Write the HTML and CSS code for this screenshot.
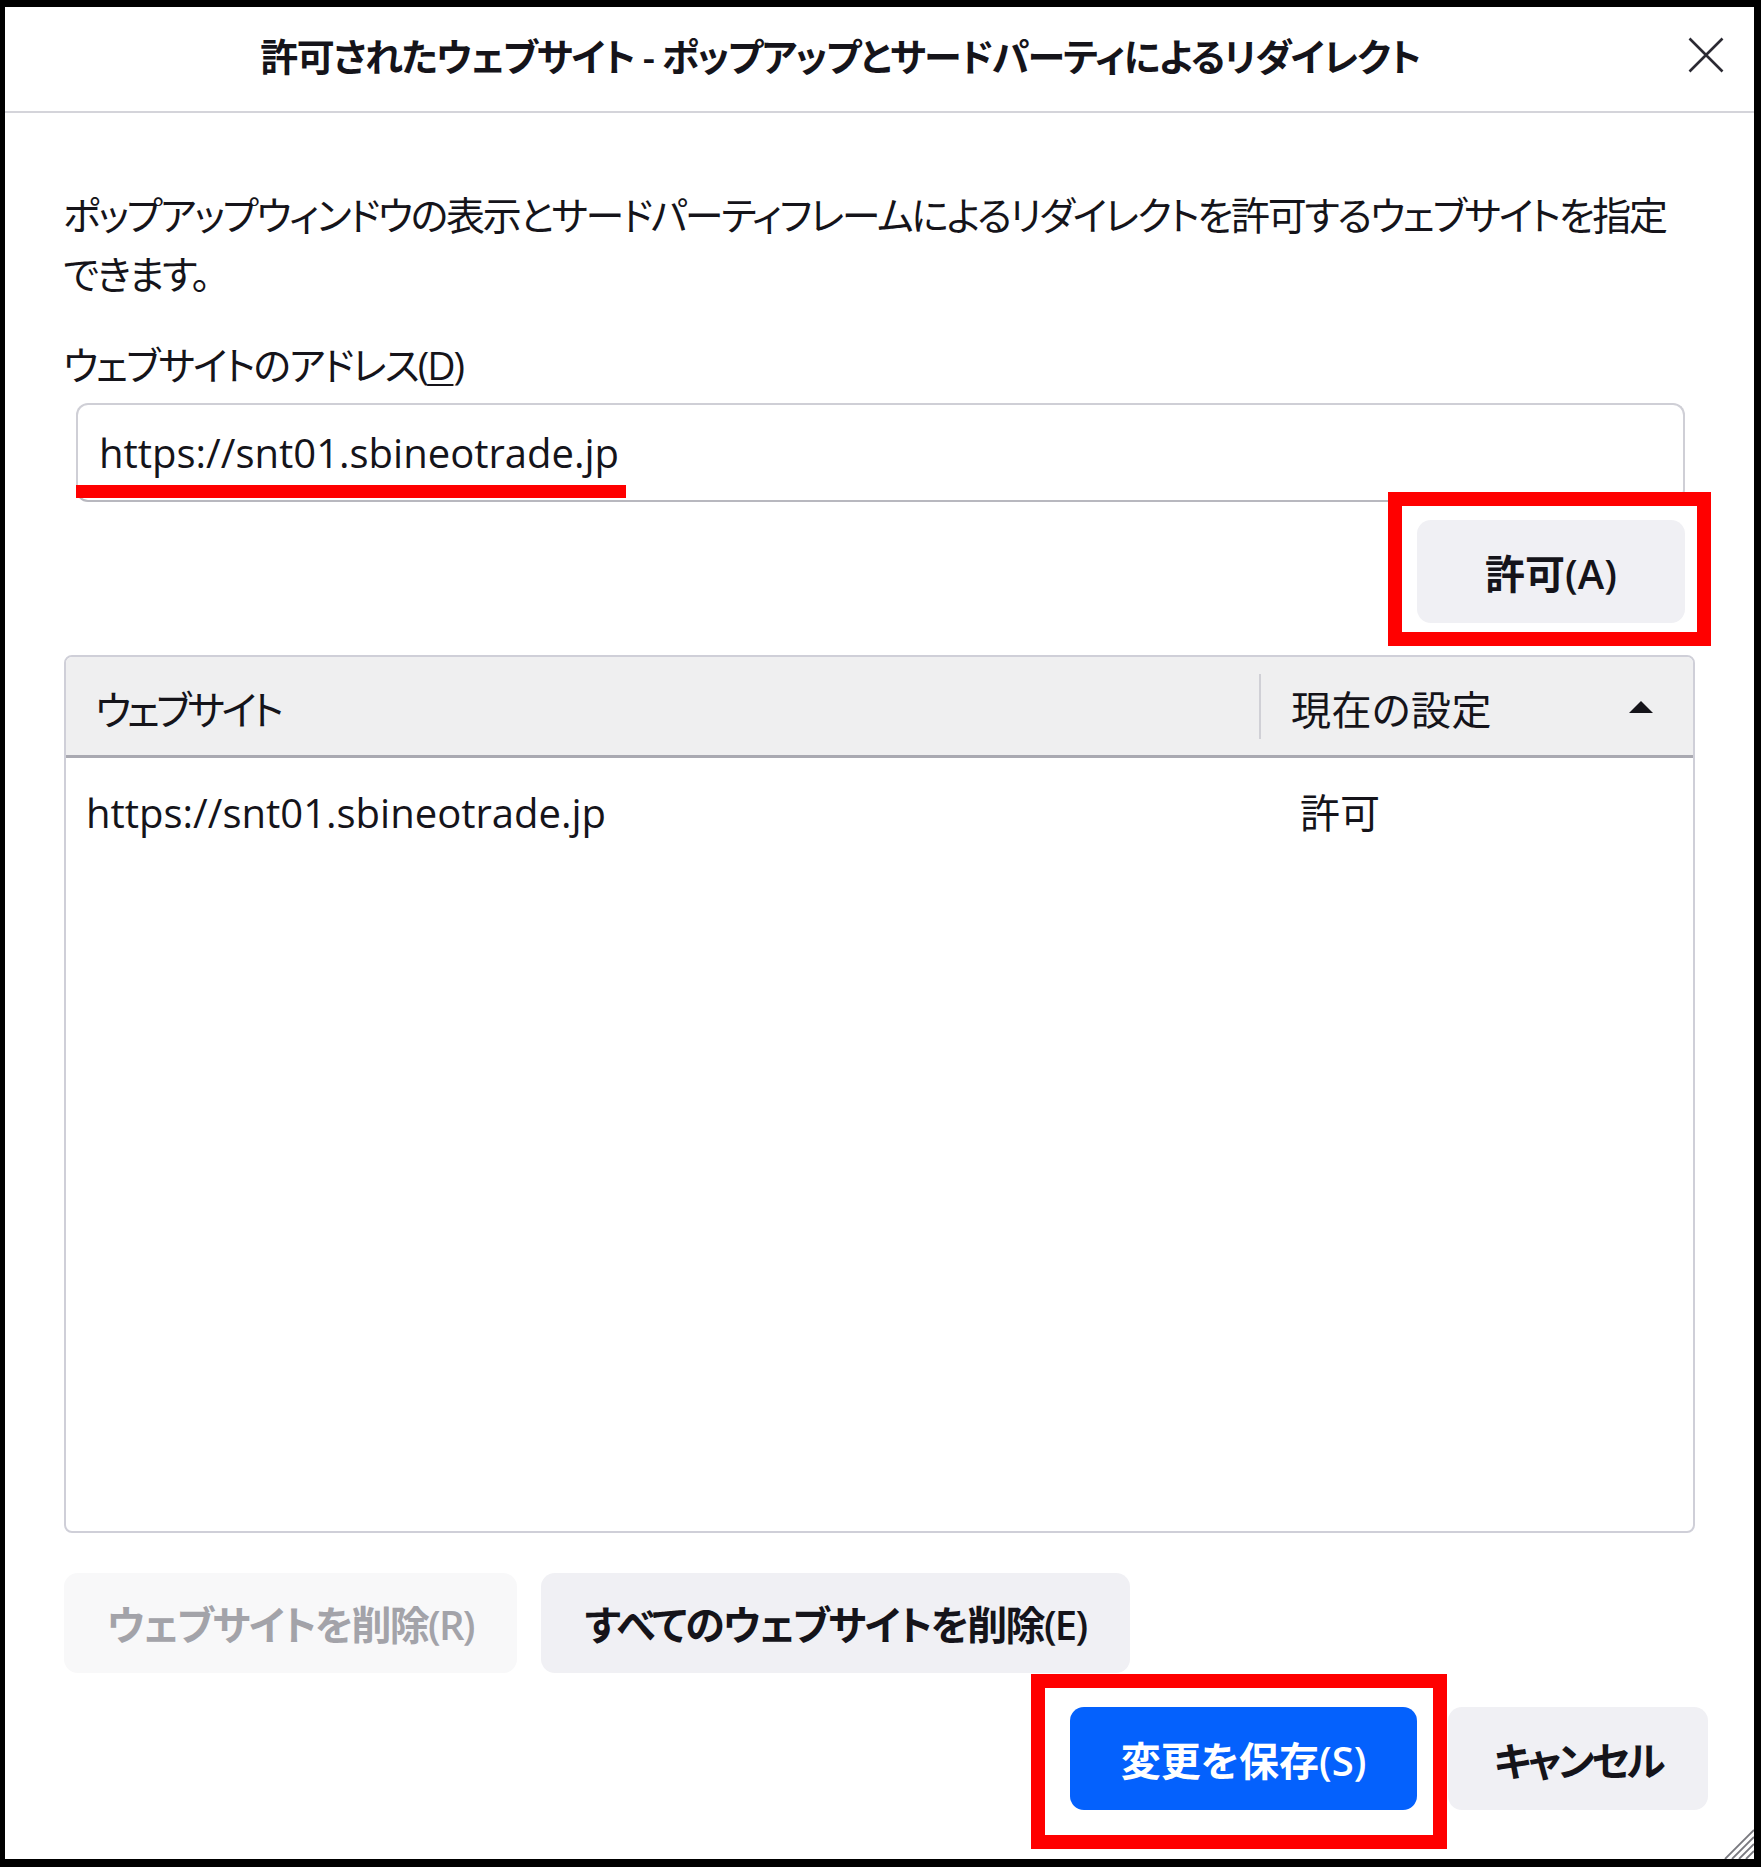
FILE: index.html
```html
<!DOCTYPE html>
<html lang="ja">
<head>
<meta charset="utf-8">
<title>許可されたウェブサイト</title>
<link rel="stylesheet" href="styles.css">
</head>
<body>
<div class="frame">
  <header class="titlebar">
    <h1 class="title">許可されたウェブサイト - ポップアップとサードパーティによるリダイレクト</h1>
    <button class="close" aria-label="閉じる">
      <svg width="36" height="36" viewBox="0 0 36 36"><path d="M1.5 1.5L34.5 34.5M34.5 1.5L1.5 34.5" stroke="#2b2a33" stroke-width="2.6" fill="none"/></svg>
    </button>
  </header>
  <main class="content">
    <p class="desc">ポップアップウィンドウの表示とサードパーティフレームによるリダイレクトを許可するウェブサイトを指定<br>できます。</p>
    <label class="label" for="url">ウェブサイトのアドレス(<u>D</u>)</label>
    <div class="input-wrap">
      <input id="url" class="input" type="text" value="https://snt01.sbineotrade.jp" readonly>
      <span class="mark-underline"></span>
    </div>
    <div class="allow-row">
      <div class="hl">
        <button class="btn btn-allow">許可(A)</button>
        <span class="mark-box mark-allow"></span>
      </div>
    </div>
    <div class="tree">
      <div class="tree-head">
        <div class="th th-site">ウェブサイト</div>
        <div class="th th-state">
          <span>現在の設定</span>
          <svg class="sort" width="24" height="12" viewBox="0 0 24 12"><path d="M12 0L24 12H0Z" fill="#15141a"/></svg>
        </div>
      </div>
      <div class="tree-row">
        <div class="td td-site">https://snt01.sbineotrade.jp</div>
        <div class="td td-state">許可</div>
      </div>
    </div>
    <div class="actions">
      <button class="btn btn-remove" disabled>ウェブサイトを削除(R)</button>
      <button class="btn btn-remove-all">すべてのウェブサイトを削除(E)</button>
    </div>
    <div class="footer">
      <div class="hl">
        <button class="btn btn-save">変更を保存(S)</button>
        <span class="mark-box mark-save"></span>
      </div>
      <button class="btn btn-cancel">キャンセル</button>
    </div>
  </main>
  <svg class="grip" width="30" height="32" viewBox="0 0 30 32">
    <path d="M30 3L1 32M30 10L8 32M30 17L15 32M30 24L22 32" stroke="#7a7a80" stroke-width="1.8" fill="none"/>
  </svg>
</div>
</body>
</html>
```
FILE: styles.css
```css
body {
  margin: 0;
  background: #fff;
}

.frame {
  position: relative;
  width: 1761px;
  height: 1867px;
  box-sizing: border-box;
  border: solid #000;
  border-width: 7px 7px 8px 5px;
  background: #fff;
  color: #15141a;
  font-family: "Open Sans", "Noto Sans CJK JP", sans-serif;
  font-feature-settings: "palt";
  display: flex;
  flex-direction: column;
}

.titlebar {
  height: 104px;
  flex: none;
  border-bottom: 2px solid #d4d4da;
  display: flex;
  align-items: flex-start;
}

.title {
  flex: 1;
  margin: 0;
  padding-top: 19px;
  font-size: 38px;
  letter-spacing: -1.5px;
  line-height: 60px;
  font-weight: 600;
  text-align: center;
  white-space: nowrap;
}

.close {
  width: 62px;
  height: 60px;
  margin: 18px 17px 0 0;
  padding: 0;
  border: 0;
  background: none;
  display: flex;
  align-items: center;
  justify-content: center;
}

.content {
  flex: 1;
  padding: 72px 0 0 58px;
  display: flex;
  flex-direction: column;
  align-items: flex-start;
}

.desc {
  margin: 0;
  font-size: 39px;
  letter-spacing: -2.3px;
  line-height: 59px;
  white-space: nowrap;
}

.label {
  display: block;
  margin-top: 32px;
  font-size: 39px;
  letter-spacing: -2px;
  line-height: 59px;
}

.label u {
  text-decoration-thickness: 2px;
  text-underline-offset: 4px;
}

.input-wrap {
  position: relative;
  margin: 9px 0 0 13px;
}

.input {
  display: block;
  width: 1609px;
  height: 99px;
  box-sizing: border-box;
  margin: 0;
  border: 2px solid #cfcfd6;
  border-bottom-color: #b8b8bf;
  border-radius: 12px;
  padding: 0 0 0 21px;
  font-family: inherit;
  font-size: 40px;
  letter-spacing: 0;
  color: #15141a;
  background: #fff;
  outline: none;
}

.mark-underline {
  position: absolute;
  left: 0;
  top: 82px;
  width: 550px;
  height: 13px;
  background: #ff0000;
}

.allow-row {
  width: 1609px;
  margin: 18px 0 0 13px;
  display: flex;
  justify-content: flex-end;
}

.hl {
  position: relative;
}

.mark-box {
  position: absolute;
  border: 14px solid #ff0000;
  pointer-events: none;
}

.mark-allow {
  left: -29px;
  top: -28px;
  right: -26px;
  bottom: -23px;
}

.mark-save {
  left: -39px;
  top: -33px;
  right: -30px;
  bottom: -39px;
}

.btn {
  font-family: inherit;
  font-feature-settings: "palt";
  font-size: 40px;
  font-weight: 600;
  color: #15141a;
  background: #f0f0f4;
  border: 0;
  border-radius: 14px;
  height: 103px;
  padding: 0;
  display: flex;
  align-items: center;
  justify-content: center;
  white-space: nowrap;
}

.btn-allow {
  width: 268px;
}

.tree {
  margin: 32px 0 0 1px;
  width: 1631px;
  height: 878px;
  box-sizing: border-box;
  border: 2px solid #cfcfd8;
  border-radius: 8px;
  overflow: hidden;
}

.tree-head {
  display: flex;
  align-items: center;
  height: 101px;
  box-sizing: border-box;
  background: #efeff0;
  border-bottom: 3px solid #a9a9b1;
}

.th {
  font-size: 40px;
  line-height: 60px;
  box-sizing: border-box;
}

.th-site {
  width: 1193px;
  padding: 7px 0 0 29px;
  letter-spacing: -3.8px;
}

.th-state {
  flex: 1;
  height: 65px;
  border-left: 2px solid #d0d0d6;
  padding: 0 40px 0 30px;
  display: flex;
  align-items: center;
  justify-content: space-between;
}

.th-state span {
  padding-top: 7px;
  letter-spacing: 0.5px;
}

.sort {
  margin-top: 2px;
}

.tree-row {
  display: flex;
  padding-top: 25px;
}

.td {
  line-height: 60px;
  box-sizing: border-box;
}

.td-site {
  width: 1193px;
  padding-left: 20px;
  font-size: 40px;
  letter-spacing: 0;
}

.td-state {
  padding-left: 41px;
  font-size: 40px;
}

.actions {
  display: flex;
  gap: 24px;
  margin: 40px 0 0 1px;
}

.btn-remove {
  width: 453px;
  height: 100px;
  background: #f8f8f9;
  color: #a3a3a9;
  letter-spacing: -1.7px;
}

.btn-remove-all {
  width: 589px;
  height: 100px;
  letter-spacing: -1.7px;
}

.footer {
  align-self: stretch;
  display: flex;
  justify-content: flex-end;
  gap: 31px;
  margin-top: 34px;
  padding-right: 46px;
}

.btn-save {
  width: 347px;
  background: #0461fd;
  color: #fff;
}

.btn-cancel {
  width: 260px;
  letter-spacing: -3.2px;
}

.grip {
  position: absolute;
  right: 0;
  bottom: 0;
}
```
